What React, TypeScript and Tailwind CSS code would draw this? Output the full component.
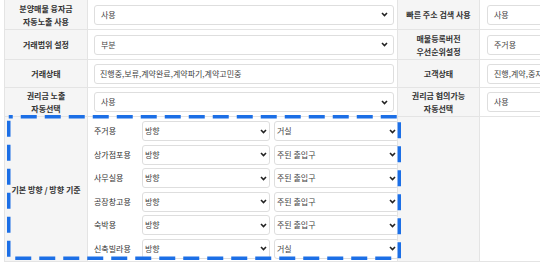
import React from "react";

const font = { fontFamily: '"Noto Sans CJK KR", "Noto Sans", sans-serif' };

const Chevron = () => (
  <svg width="7" height="5" viewBox="0 0 7 5" className="shrink-0">
    <polyline points="1,1 3.5,3.5 6,1" fill="none" stroke="#222" strokeWidth="1.6" />
  </svg>
);

const Select = ({ value, small }: { value: string; small?: boolean }) => (
  <div
    className={`flex items-center justify-between h-[20px] bg-white border border-[#dedede] rounded-[3px] text-[8px] text-[#444] ${
      small ? "pl-[2px] pr-[2px]" : "pl-[6px] pr-[5px]"
    }`}
  >
    <span>{value}</span>
    <Chevron />
  </div>
);

const Label = ({ children }: { children: React.ReactNode }) => (
  <div className="flex items-center justify-center text-center bg-[#f5f5f5] border-r border-b border-[#e4e4e4] text-[8px] leading-[13px] font-bold text-[#333]">
    <div>{children}</div>
  </div>
);

const Cell = ({ children, right }: { children?: React.ReactNode; right?: boolean }) => (
  <div
    className={`flex flex-col justify-center border-r border-b border-[#e4e4e4] ${
      right ? "pl-[7px]" : "pl-[6px] pr-[3px]"
    }`}
  >
    {children}
  </div>
);

const subRows = [
  { name: "주거용", a: "방향", b: "거실" },
  { name: "상가점포용", a: "방향", b: "주된 출입구" },
  { name: "사무실용", a: "방향", b: "주된 출입구" },
  { name: "공장창고용", a: "방향", b: "주된 출입구" },
  { name: "숙박용", a: "방향", b: "주된 출입구" },
  { name: "신축빌라용", a: "방향", b: "거실" },
];

export default function App() {
  return (
    <div className="relative w-[540px] h-[270px] overflow-hidden bg-white" style={font}>
      <div className="ml-[4px] border-l border-[#e4e4e4] grid grid-cols-[83px_310px_82px_220px] grid-rows-[30px_30px_28px_29px_145px]">
        {/* row 1 */}
        <Label>
          분양매물 융자금
          <br />
          자동노출 사용
        </Label>
        <Cell>
          <Select value="사용" />
        </Cell>
        <Label>빠른 주소 검색 사용</Label>
        <Cell right>
          <Select value="사용" />
        </Cell>

        {/* row 2 */}
        <Label>거래범위 설정</Label>
        <Cell>
          <Select value="부분" />
        </Cell>
        <Label>
          매물등록버전
          <br />
          우선순위설정
        </Label>
        <Cell right>
          <Select value="주거용" />
        </Cell>

        {/* row 3 */}
        <Label>거래상태</Label>
        <Cell>
          <div className="flex items-center h-[20px] bg-white border border-[#dedede] rounded-[3px] pl-[5px] text-[8px] text-[#444]">
            진행중,보류,계약완료,계약파기,계약고민중
          </div>
        </Cell>
        <Label>고객상태</Label>
        <Cell right>
          <div className="flex items-center h-[20px] bg-white border border-[#dedede] rounded-[3px] pl-[6px] text-[8px] text-[#444] whitespace-nowrap overflow-hidden">
            진행,계약,중지,보류,완료
          </div>
        </Cell>

        {/* row 4 */}
        <Label>
          권리금 노출
          <br />
          자동선택
        </Label>
        <Cell>
          <Select value="사용" />
        </Cell>
        <Label>
          권리금 협의가능
          <br />
          자동선택
        </Label>
        <Cell right>
          <Select value="사용" />
        </Cell>

        {/* row 5 */}
        <Label>기본 방향 / 방향 기준</Label>
        <div className="border-r border-b border-[#e4e4e4] pl-[6px] pr-[3px] pt-[4px] flex flex-col gap-[3.5px]">
          {subRows.map((r) => (
            <div key={r.name} className="grid grid-cols-[48px_124px_125px] gap-x-[4px] items-center">
              <span className="text-[8px] text-[#333]">{r.name}</span>
              <div className="-ml-[4px]">
                <Select value={r.a} small />
              </div>
              <Select value={r.b} small />
            </div>
          ))}
        </div>
        <div className="bg-[#f5f5f5] border-r border-b border-[#e4e4e4]" />
        <div className="border-b border-[#e4e4e4]" />
      </div>

      {/* highlight box */}
      <svg className="absolute left-[7px] top-[115px]" width="395" height="146">
        <rect
          x="1.75"
          y="1.75"
          width="390.5"
          height="141.5"
          fill="none"
          stroke="#1c6fe6"
          strokeWidth="3.5"
          strokeDasharray="16 8"
          strokeDashoffset="12"
        />
      </svg>
    </div>
  );
}
